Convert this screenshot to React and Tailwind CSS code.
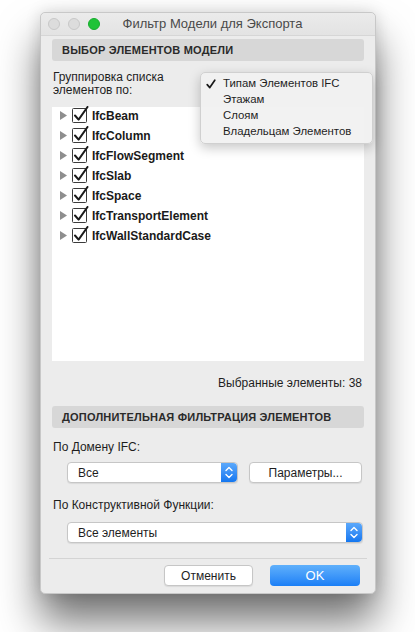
import React from "react";

const font = { fontFamily: '"Liberation Sans", Arial, sans-serif' };

const items = [
  "IfcBeam",
  "IfcColumn",
  "IfcFlowSegment",
  "IfcSlab",
  "IfcSpace",
  "IfcTransportElement",
  "IfcWallStandardCase",
];

const menuItems = ["Типам Элементов IFC", "Этажам", "Слоям", "Владельцам Элементов"];

// Checkbox with the oversize macOS tick
const CheckBox = () => (
  <svg width="17" height="17" viewBox="0 0 17 17" className="shrink-0">
    <rect x="0.5" y="2.5" width="14" height="14" rx="1" fill="#fff" stroke="#3a3a3a" />
    <path d="M3 9.5 L6.6 13.6 L15.5 1" fill="none" stroke="#1a1a1a" strokeWidth="2" strokeLinecap="round" strokeLinejoin="round" />
  </svg>
);

const Disclosure = () => (
  <svg width="7" height="9" viewBox="0 0 7 9" className="shrink-0">
    <path d="M0 0 L7 4.5 L0 9 Z" fill="#8e8e8e" />
  </svg>
);

const MenuCheck = () => (
  <svg width="10" height="10" viewBox="0 0 10 10">
    <path d="M1.2 5.6 L3.8 8.6 L8.8 1.2" fill="none" stroke="#1a1a1a" strokeWidth="1.7" strokeLinecap="round" strokeLinejoin="round" />
  </svg>
);

// Blue up/down stepper at the right of a popup button
const Stepper = () => (
  <div className="w-[16px] self-stretch rounded-r-[4px] bg-gradient-to-b from-[#5aa8fb] to-[#1277f0] flex items-center justify-center">
    <svg width="8" height="13" viewBox="0 0 8 13">
      <path d="M1 4.5 L4 1.5 L7 4.5 M1 8.5 L4 11.5 L7 8.5" fill="none" stroke="#fff" strokeWidth="1.4" strokeLinecap="round" strokeLinejoin="round" />
    </svg>
  </div>
);

const Popup = ({ label, className }) => (
  <div className={"h-[21px] flex items-stretch bg-white rounded-[4px] border border-[#c6c6c6] shadow-[0_1px_1px_rgba(0,0,0,0.08)] " + className}>
    <div className="flex-1 flex items-center pl-[10px] text-[12px] text-[#1e1e1e]">{label}</div>
    <Stepper />
  </div>
);

const SectionHeader = ({ children, className }) => (
  <div className={"h-[22px] rounded-[3px] bg-[#d7d7d7] flex items-center pl-[10px] text-[11px] font-bold text-[#2a2a2a] tracking-[0.2px] " + className}>
    {children}
  </div>
);

export default function App() {
  return (
    <div className="min-h-[632px] w-[415px] bg-white" style={font}>
      <div className="pt-[12px] pl-[40px]">
        <div className="relative w-[336px] rounded-[5px] bg-[#ececec] border border-[#c8c8c8] shadow-[0_28px_42px_rgba(0,0,0,0.55),0_0_16px_rgba(0,0,0,0.14)]">
          {/* Title bar */}
          <div className="relative h-[23px] flex items-center rounded-t-[5px] bg-gradient-to-b from-[#ebebeb] to-[#e3e3e3] border-b border-[#d6d6d6]">
            <div className="flex items-center gap-[8px] pl-[7px]">
              <span className="w-[12px] h-[12px] rounded-full bg-[#dcdcdc] border border-[#c8c8c8]" />
              <span className="w-[12px] h-[12px] rounded-full bg-[#dcdcdc] border border-[#c8c8c8]" />
              <span className="w-[12px] h-[12px] rounded-full bg-[#1fc337] border border-[#17ad2d]" />
            </div>
            <div className="flex-1 text-center text-[13px] text-[#4a4a4a] pr-[50px]">Фильтр Модели для Экспорта</div>
          </div>

          <div className="px-[11px] pt-[3px]">
            <SectionHeader>ВЫБОР ЭЛЕМЕНТОВ МОДЕЛИ</SectionHeader>

            <div className="mt-[10px] pl-[1px] text-[12px] leading-[13px] text-[#1e1e1e]">
              Группировка списка
              <br />
              элементов по:
            </div>

            {/* Element list */}
            <div className="mt-[10px] h-[254px] bg-white flex flex-col gap-[3px] pl-[8px]">
              {items.map((name) => (
                <div key={name} className="h-[17px] flex items-center">
                  <Disclosure />
                  <div className="ml-[5px] -mt-[2px]">
                    <CheckBox />
                  </div>
                  <span className="ml-[3px] text-[12px] font-bold text-[#1a1a1a]">{name}</span>
                </div>
              ))}
            </div>

            <div className="mt-[15px] text-right pr-[2px] text-[12px] leading-[14px] text-[#1e1e1e]">Выбранные элементы: 38</div>

            <SectionHeader className="mt-[16px]">ДОПОЛНИТЕЛЬНАЯ ФИЛЬТРАЦИЯ ЭЛЕМЕНТОВ</SectionHeader>

            <div className="mt-[12px] pl-[1px] text-[12px] leading-[14px] text-[#1e1e1e]">По Домену IFC:</div>

            <div className="mt-[8px] ml-[15px] flex items-center gap-[11px]">
              <Popup label="Все" className="w-[171px]" />
              <div className="w-[113px] h-[21px] rounded-[4px] bg-white border border-[#c6c6c6] shadow-[0_1px_1px_rgba(0,0,0,0.08)] flex items-center justify-center text-[12px] text-[#1e1e1e]">
                Параметры...
              </div>
            </div>

            <div className="mt-[15px] pl-[1px] text-[12px] leading-[14px] text-[#1e1e1e]">По Конструктивной Функции:</div>

            <Popup label="Все элементы" className="mt-[10px] ml-[15px] w-[296px]" />
          </div>

          <div className="mt-[15px] mx-[8px] h-px bg-[#d4d4d4]" />

          <div className="mt-[6px] pb-[7px] flex justify-end gap-[17px] pr-[15px]">
            <div className="w-[89px] h-[21px] rounded-[4px] bg-white border border-[#c6c6c6] shadow-[0_1px_1px_rgba(0,0,0,0.08)] flex items-center justify-center text-[12px] text-[#1e1e1e]">
              Отменить
            </div>
            <div className="w-[90px] h-[21px] rounded-[4px] bg-gradient-to-b from-[#5fb0fb] to-[#1a7ff6] flex items-center justify-center text-[13px] text-white">
              OK
            </div>
          </div>

          {/* Open popup menu */}
          <div className="absolute left-[159px] top-[59px] w-[173px] h-[72px] rounded-[5px] bg-[#f1f1f1]/95 border border-[#d0d0d0] shadow-[0_4px_12px_rgba(0,0,0,0.22)] pt-[3px]">
            {menuItems.map((m, i) => (
              <div key={m} className="h-[16px] flex items-center text-[11.4px] text-[#1e1e1e]">
                <span className="w-[22px] pl-[5px] flex items-center">{i === 0 ? <MenuCheck /> : null}</span>
                {m}
              </div>
            ))}
          </div>
        </div>
      </div>
    </div>
  );
}
